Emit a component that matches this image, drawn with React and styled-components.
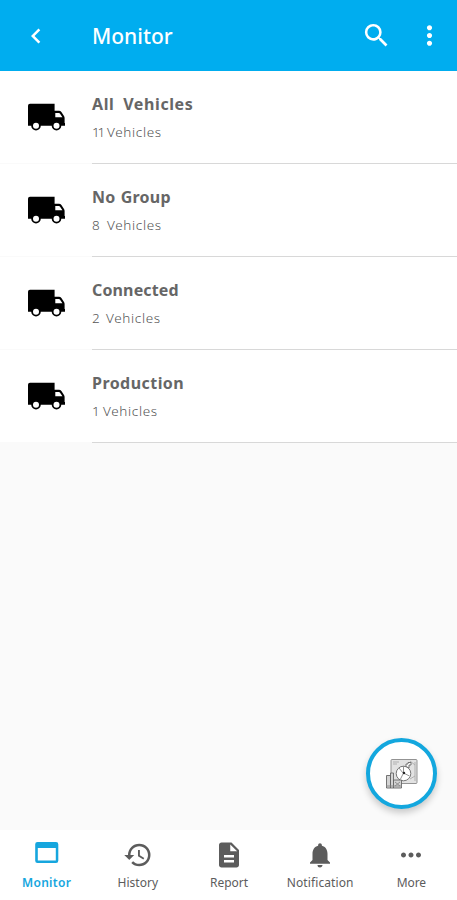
import styled, { createGlobalStyle } from "styled-components";
import {
  MdChevronLeft,
  MdDescription,
  MdHistory,
  MdMoreHoriz,
  MdMoreVert,
  MdNotifications,
  MdSearch,
} from "react-icons/md";

const GlobalStyle = createGlobalStyle`
  * {
    box-sizing: border-box;
  }
  body {
    margin: 0;
    font-family: "Noto Sans", "Open Sans", sans-serif;
    background-color: #fafafa;
  }
  svg {
    display: block;
    flex: none;
  }
`;

const Screen = styled.div`
  position: relative;
  display: flex;
  flex-direction: column;
  height: 900px;
  overflow: hidden;
`;

const Header = styled.header`
  display: flex;
  align-items: center;
  height: 71px;
  padding: 0 12px 0 21px;
  color: #fff;
  background-color: #00adef;
`;

const Title = styled.h1`
  flex: 1;
  margin: 0 0 0 41px;
  font-size: 21px;
  line-height: 30px;
  font-weight: 500;
`;

const IconButton = styled.button`
  display: flex;
  padding: 0;
  border: 0;
  color: inherit;
  background: none;
  & + & {
    margin-left: 22px;
  }
`;

const List = styled.ul`
  flex: 1;
  margin: 0;
  padding: 0;
  list-style: none;
`;

const Row = styled.li`
  display: flex;
  height: 93px;
  background-color: #fff;
`;

const RowIcon = styled.div`
  width: 92px;
  padding: 32px 0 0 27px;
  border-bottom: 1px solid #fafafa;
`;

const RowText = styled.div`
  flex: 1;
  padding-top: 22px;
  border-bottom: 1px solid #d8d8d8;
  white-space: nowrap;
`;

const Name = styled.div`
  font-size: 16px;
  line-height: 23px;
  font-weight: 700;
  color: #666;
  letter-spacing: ${(props) => props.$spacing}px;
  word-spacing: ${(props) => props.$gap || 0}px;
`;

const Count = styled.div`
  display: flex;
  margin-top: 5px;
  font-size: 13.5px;
  line-height: 22px;
  font-weight: 300;
  color: #555;
  letter-spacing: 0.65px;
`;

const Amount = styled.span`
  width: ${(props) => props.$width}px;
  letter-spacing: ${(props) => (props.$tight ? -2.2 : 0)}px;
`;

const MapButton = styled.button`
  position: absolute;
  right: 20px;
  bottom: 91px;
  display: flex;
  align-items: center;
  justify-content: center;
  width: 71px;
  height: 71px;
  padding: 0;
  border: 4px solid #13a7de;
  border-radius: 50%;
  background-color: #fff;
  box-shadow: 0 4px 7px rgba(0, 0, 0, 0.2);
`;

const TabBar = styled.nav`
  display: flex;
  height: 70px;
  padding-left: 1px;
  background-color: #fff;
`;

const Tab = styled.a`
  flex: 1;
  display: flex;
  flex-direction: column;
  align-items: center;
  padding-top: 10px;
  color: ${(props) => (props.$active ? "#16a6de" : "#5c5c5c")};
`;

const TabLabel = styled.span`
  margin-top: 4px;
  font-size: 12px;
  line-height: 18px;
  font-weight: ${(props) => (props.$active ? 600 : 400)};
  letter-spacing: ${(props) => props.$spacing}px;
  white-space: nowrap;
`;

const TruckIcon = () => (
  <svg width="38" height="28" viewBox="0 0 38 28">
    <path
      d="M3 .7h24.600v7H32q1.400 0 2.400 1.400l2.600 3.800q.6 1 .6 2v5.100h.6v2.700H1V2.700Q1 .7 3 .7Z"
      fill="#000"
    />
    <path d="M28.300 10h3.600q.6 0 1 .6l2.500 3.700h-7.100Z" fill="#fff" />
    <circle cx="9" cy="22.700" r="3.900" fill="#fff" stroke="#000" strokeWidth="1.800" />
    <circle cx="29.500" cy="22.700" r="3.900" fill="#fff" stroke="#000" strokeWidth="1.800" />
  </svg>
);

const MonitorIcon = () => (
  <svg width="30" height="30" viewBox="0 0 30 30">
    <path
      fill="currentColor"
      fillRule="evenodd"
      d="M5.500 2h18.500a2.300 2.300 0 0 1 2.300 2.300v16.400a2.300 2.300 0 0 1-2.300 2.300H5.500a2.300 2.300 0 0 1-2.300-2.300V4.300A2.300 2.300 0 0 1 5.500 2ZM5.800 8v12.400h18V8Z"
    />
  </svg>
);

const MapIcon = () => (
  <svg width="33" height="32" viewBox="0 0 33 32" fill="none" stroke="#666" strokeWidth="0.9">
    <rect x="6" y="1.500" width="26" height="24" rx="1" fill="#e2e2e2" stroke="#888" />
    <path d="M8 4h6M8 6h4M30 4v19M25 3l5 4M25 21l5-3" stroke="#aaa" />
    <circle cx="18.500" cy="15.500" r="7.300" fill="#fff" />
    <path d="M18.500 8v7l-3 6M18.500 15l6 3M14 10l4 5" stroke="#888" />
    <circle cx="19" cy="15" r="1.200" fill="#222" stroke="none" />
    <path d="M21 8.500V6h2V4.500h3V7h-2v3Z" fill="#fff" />
    <path d="M1.500 30V17.500h4V30M5.500 30V15h3v15M8.500 30v-8h8v8H1.500" fill="#d4d4d4" />
    <path d="M1 28h16M10 24l5 4M15 24l-5 4" stroke="#888" />
  </svg>
);

const groups = [
  { name: "All Vehicles", count: 11, spacing: 0.6, gap: 4, width: 15 },
  { name: "No Group", count: 8, spacing: 0.2, gap: 1, width: 15 },
  { name: "Connected", count: 2, spacing: 0.15, width: 14 },
  { name: "Production", count: 1, spacing: 0.45, width: 11 },
];

const tabs = [
  { label: "Monitor", icon: <MonitorIcon />, active: true, spacing: 0.3 },
  { label: "History", icon: <MdHistory size={30} />, spacing: 0 },
  { label: "Report", icon: <MdDescription size={30} />, spacing: 0 },
  { label: "Notification", icon: <MdNotifications size={30} />, spacing: 0.1 },
  { label: "More", icon: <MdMoreHoriz size={30} />, spacing: -0.1 },
];

const App = () => {
  return (
    <>
      <GlobalStyle />
      <Screen>
        <Header>
          <IconButton>
            <MdChevronLeft size={30} />
          </IconButton>
          <Title>Monitor</Title>
          <IconButton>
            <MdSearch size={31} />
          </IconButton>
          <IconButton>
            <MdMoreVert size={31} />
          </IconButton>
        </Header>

        <List>
          {groups.map((group) => (
            <Row key={group.name}>
              <RowIcon>
                <TruckIcon />
              </RowIcon>
              <RowText>
                <Name $spacing={group.spacing} $gap={group.gap}>
                  {group.name}
                </Name>
                <Count>
                  <Amount $width={group.width} $tight={group.count > 9}>
                    {group.count}
                  </Amount>
                  <span>Vehicles</span>
                </Count>
              </RowText>
            </Row>
          ))}
        </List>

        <TabBar>
          {tabs.map((tab) => (
            <Tab key={tab.label} $active={tab.active}>
              {tab.icon}
              <TabLabel $active={tab.active} $spacing={tab.spacing}>
                {tab.label}
              </TabLabel>
            </Tab>
          ))}
        </TabBar>

        <MapButton>
          <MapIcon />
        </MapButton>
      </Screen>
    </>
  );
};

export default App;
